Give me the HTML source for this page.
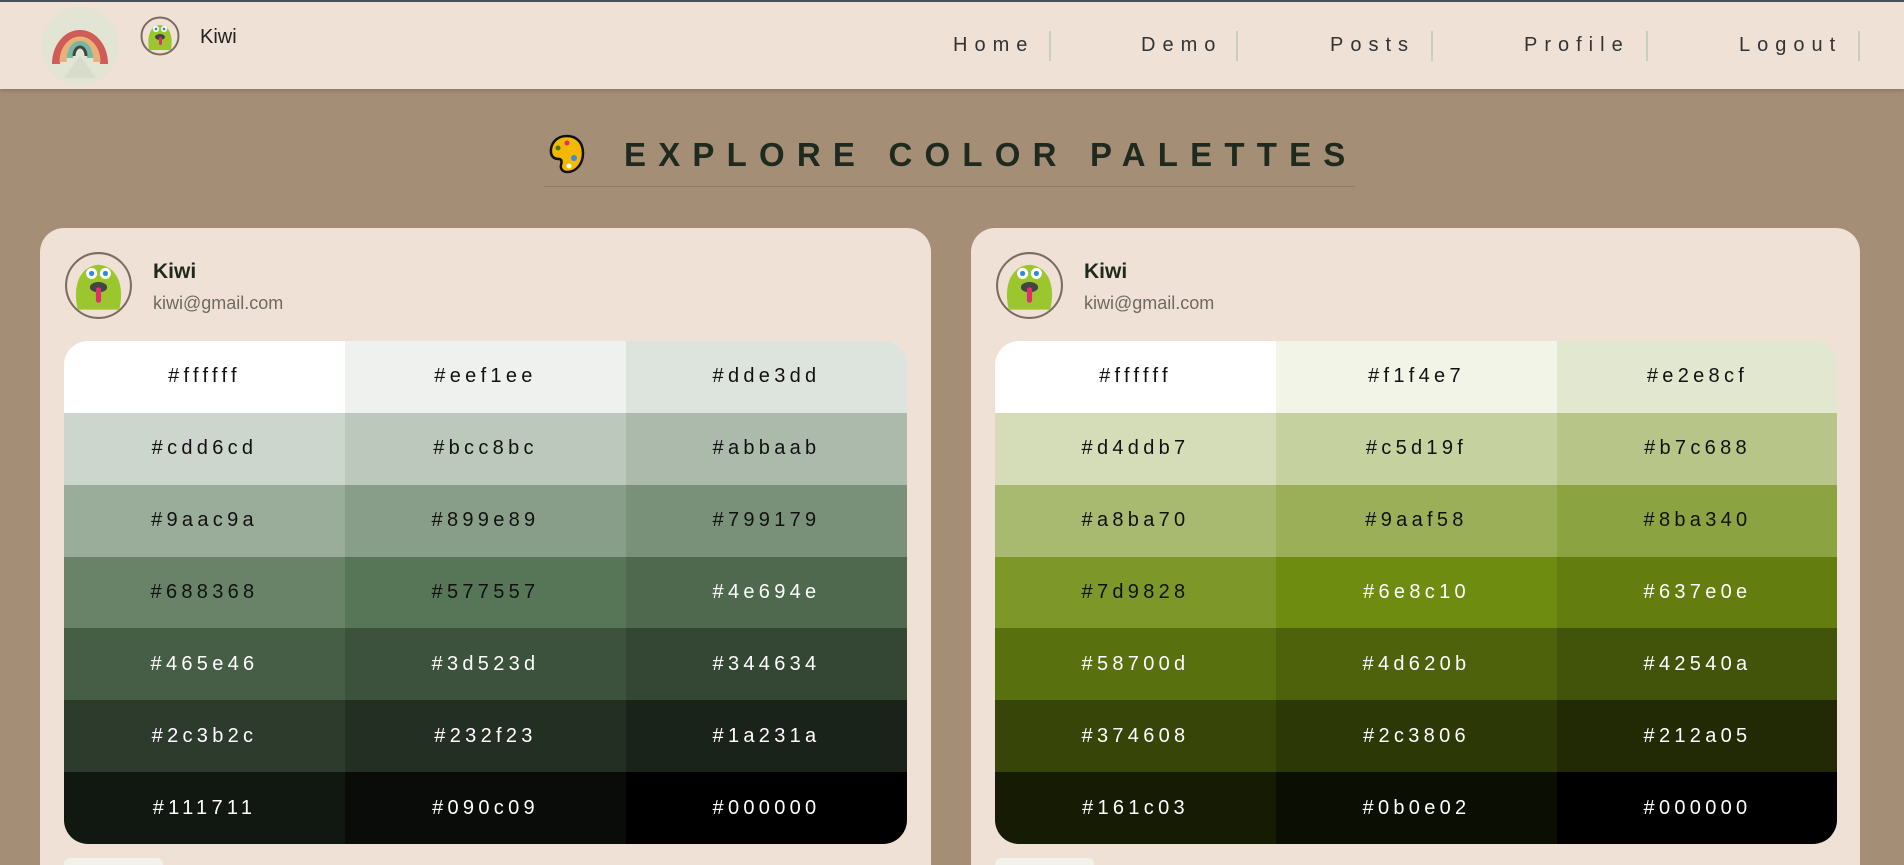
<!DOCTYPE html>
<html><head><meta charset="utf-8"><style>
*{box-sizing:border-box;margin:0;padding:0}
html,body{width:1904px;height:865px;overflow:hidden}
body{background:#a58e76;font-family:"Liberation Sans",sans-serif;position:relative}
.nav{position:absolute;left:0;top:0;width:1904px;height:89px;background:#efe1d5;border-top:2px solid #4a5058;box-shadow:0 2px 4px rgba(0,0,0,.15)}
.nav a{position:absolute;top:32px;font-size:20px;letter-spacing:7px;color:#333;text-decoration:none}
.sep{position:absolute;top:29px;width:2px;height:30px;background:#c8d0bc}
.title{position:absolute;left:624px;top:136px;font-size:33px;font-weight:bold;letter-spacing:12.2px;color:#1f2a1f;white-space:nowrap}
.uline{position:absolute;left:544px;top:186px;width:811px;height:1px;background:#8f7b66}
.card{position:absolute;top:228px;width:891px;height:637px;background:#efe1d5;border-radius:24px 24px 0 0;overflow:hidden}
.name{position:absolute;left:113px;top:32px;font-size:21px;font-weight:bold;color:#1f2a1f}
.mail{position:absolute;left:113px;top:65px;font-size:18px;color:#6e6a62}
.grid{position:absolute;left:24px;top:113px;width:843px;height:503px;border-radius:24px;overflow:hidden;display:grid;grid-template-columns:281px 281px 281px;grid-template-rows:repeat(7,1fr)}
.grid div{display:flex;align-items:center;justify-content:center;font-size:20px;letter-spacing:4.3px;color:#fff}
.grid div.d{color:#111}
.btn{position:absolute;left:24px;top:630px;width:99px;height:40px;background:#f2f1ea;border-radius:6px}
.av{position:absolute;left:24px;top:23px}
</style></head><body>
<div class="nav">
<svg style="position:absolute;left:40px;top:4px" width="80" height="80" viewBox="0 0 80 80">
<circle cx="40" cy="40" r="39" fill="#e2e4d4"/>
<path d="M40 50 L24 72 L56 72 Z" fill="#d8dccb"/>
<path d="M16 58 A24 30 0 1 1 64 58" fill="none" stroke="#cf5c56" stroke-width="8"/>
<path d="M23 56 A17 22 0 1 1 57 56" fill="none" stroke="#e9b07a" stroke-width="7"/>
<path d="M30 52 A10 14 0 1 1 50 52" fill="none" stroke="#74b8a6" stroke-width="6"/>
<path d="M34 50 A6 9 0 1 1 46 50" fill="none" stroke="#444" stroke-width="3"/>
</svg>
<svg style="position:absolute;left:140px;top:14px" width="40" height="40" viewBox="0 0 40 40">
<circle cx="20" cy="20" r="18.5" fill="#efe1d5" stroke="#7a6d60" stroke-width="2"/>
<path d="M9 34 C7 22 9 10 20 9 C31 10 33 22 31 34 Z" fill="#9cc62d"/>
<circle cx="16" cy="13" r="3" fill="#fff"/><circle cx="24" cy="13" r="3" fill="#fff"/>
<circle cx="16" cy="13" r="1.4" fill="#2a8ad8"/><circle cx="24" cy="13" r="1.4" fill="#2a8ad8"/>
<ellipse cx="20" cy="21" rx="5" ry="3" fill="#444"/><rect x="19" y="21" width="3" height="8" rx="1.5" fill="#e0306a"/>
</svg>
<span style="position:absolute;left:200px;top:24px;font-size:20px;color:#222">Kiwi</span>
<a style="left:953px">Home</a><div class="sep" style="left:1049px"></div>
<a style="left:1141px">Demo</a><div class="sep" style="left:1236px"></div>
<a style="left:1330px">Posts</a><div class="sep" style="left:1431px"></div>
<a style="left:1524px">Profile</a><div class="sep" style="left:1646px"></div>
<a style="left:1739px">Logout</a><div class="sep" style="left:1858px"></div>
</div>
<svg style="position:absolute;left:548px;top:134px" width="38" height="40" viewBox="0 0 38 40">
<path d="M19 2C8 2 2 10 3 19c1 5 5 6 8 6 3 0 3 3 2 6-1 4 2 7 6 7 10 0 16-9 16-19C35 9 29 2 19 2z" fill="#f5b800" stroke="#111" stroke-width="2.5"/>
<circle cx="10" cy="14" r="2.5" fill="#4a7a20"/><circle cx="19" cy="9" r="2.5" fill="#e0306a"/><circle cx="26" cy="24" r="3" fill="#3a8ae0"/><circle cx="21" cy="32" r="2.5" fill="#fff"/>
</svg>
<div class="title">EXPLORE COLOR PALETTES</div>
<div class="uline"></div>

<div class="card" style="left:40px">
<svg class="av" width="69" height="69" viewBox="0 0 40 40">
<circle cx="20" cy="20" r="18.8" fill="#efe1d5" stroke="#7a6d60" stroke-width="1.2"/>
<path d="M8 34 C5 22 8 9 20 8 C32 9 35 22 32 34 Z" fill="#9cc62d"/>
<circle cx="16" cy="13" r="3.2" fill="#fff"/><circle cx="24" cy="13" r="3.2" fill="#fff"/>
<circle cx="16" cy="13" r="1.5" fill="#2a8ad8"/><circle cx="24" cy="13" r="1.5" fill="#2a8ad8"/>
<ellipse cx="20" cy="21" rx="5" ry="3" fill="#444"/><rect x="18.5" y="21" width="3" height="9" rx="1.5" fill="#e0306a"/>
</svg>
<div class="name">Kiwi</div><div class="mail">kiwi@gmail.com</div>
<div class="grid">
<div class="d" style="background:#ffffff">#ffffff</div><div class="d" style="background:#eef1ee">#eef1ee</div><div class="d" style="background:#dde3dd">#dde3dd</div>
<div class="d" style="background:#cdd6cd">#cdd6cd</div><div class="d" style="background:#bcc8bc">#bcc8bc</div><div class="d" style="background:#abbaab">#abbaab</div>
<div class="d" style="background:#9aac9a">#9aac9a</div><div class="d" style="background:#899e89">#899e89</div><div class="d" style="background:#799179">#799179</div>
<div class="d" style="background:#688368">#688368</div><div class="d" style="background:#577557">#577557</div><div style="background:#4e694e">#4e694e</div>
<div style="background:#465e46">#465e46</div><div style="background:#3d523d">#3d523d</div><div style="background:#344634">#344634</div>
<div style="background:#2c3b2c">#2c3b2c</div><div style="background:#232f23">#232f23</div><div style="background:#1a231a">#1a231a</div>
<div style="background:#111711">#111711</div><div style="background:#090c09">#090c09</div><div style="background:#000000">#000000</div>
</div>
<div class="btn"></div>
</div>

<div class="card" style="left:971px;width:889px">
<svg class="av" width="69" height="69" viewBox="0 0 40 40">
<circle cx="20" cy="20" r="18.8" fill="#efe1d5" stroke="#7a6d60" stroke-width="1.2"/>
<path d="M8 34 C5 22 8 9 20 8 C32 9 35 22 32 34 Z" fill="#9cc62d"/>
<circle cx="16" cy="13" r="3.2" fill="#fff"/><circle cx="24" cy="13" r="3.2" fill="#fff"/>
<circle cx="16" cy="13" r="1.5" fill="#2a8ad8"/><circle cx="24" cy="13" r="1.5" fill="#2a8ad8"/>
<ellipse cx="20" cy="21" rx="5" ry="3" fill="#444"/><rect x="18.5" y="21" width="3" height="9" rx="1.5" fill="#e0306a"/>
</svg>
<div class="name">Kiwi</div><div class="mail">kiwi@gmail.com</div>
<div class="grid" style="width:842px">
<div class="d" style="background:#ffffff">#ffffff</div><div class="d" style="background:#f1f4e7">#f1f4e7</div><div class="d" style="background:#e2e8cf">#e2e8cf</div>
<div class="d" style="background:#d4ddb7">#d4ddb7</div><div class="d" style="background:#c5d19f">#c5d19f</div><div class="d" style="background:#b7c688">#b7c688</div>
<div class="d" style="background:#a8ba70">#a8ba70</div><div class="d" style="background:#9aaf58">#9aaf58</div><div class="d" style="background:#8ba340">#8ba340</div>
<div class="d" style="background:#7d9828">#7d9828</div><div style="background:#6e8c10">#6e8c10</div><div style="background:#637e0e">#637e0e</div>
<div style="background:#58700d">#58700d</div><div style="background:#4d620b">#4d620b</div><div style="background:#42540a">#42540a</div>
<div style="background:#374608">#374608</div><div style="background:#2c3806">#2c3806</div><div style="background:#212a05">#212a05</div>
<div style="background:#161c03">#161c03</div><div style="background:#0b0e02">#0b0e02</div><div style="background:#000000">#000000</div>
</div>
<div class="btn"></div>
</div>
</body></html>
